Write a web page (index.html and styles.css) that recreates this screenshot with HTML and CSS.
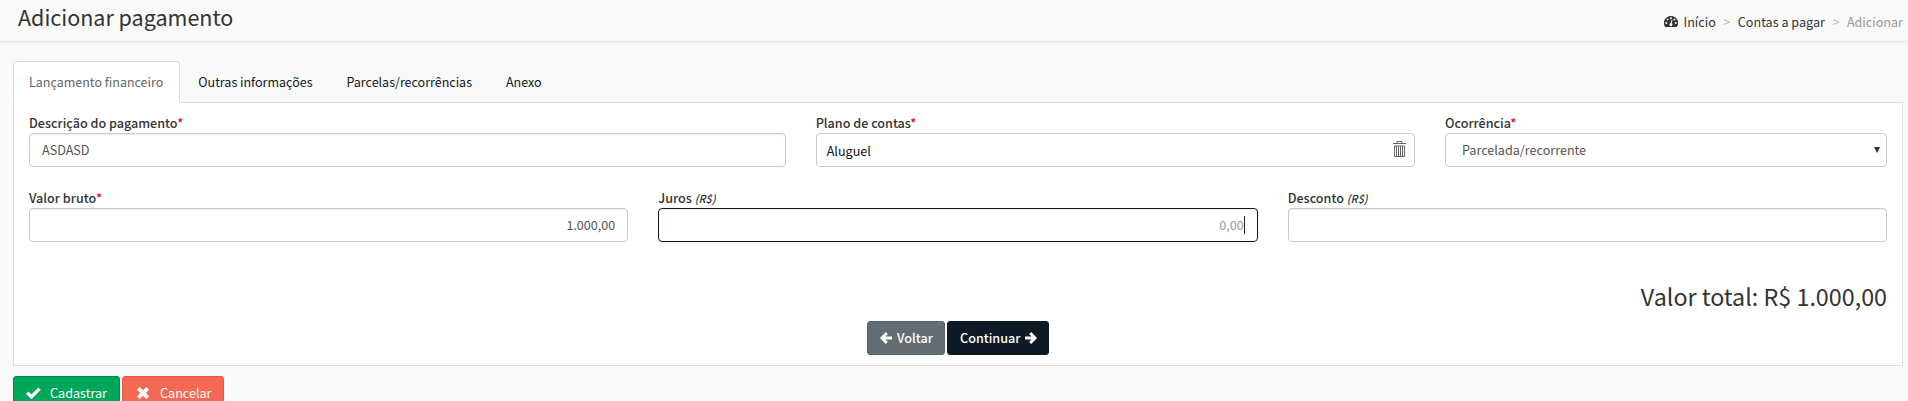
FILE: index.html
```html
<!DOCTYPE html>
<html lang="pt-BR">
<head>
<meta charset="utf-8">
<title>Adicionar pagamento</title>
<link rel="stylesheet" href="styles.css">
</head>
<body>
<header class="header">
  <h1 class="title">Adicionar pagamento</h1>
  <nav class="crumbs">
    <svg class="gauge" viewBox="0 0 14 12" width="14" height="12"><path fill="#333" d="M7 0a7 7 0 0 0-6 10.700q.2.300.6.300h10.800q.4 0 .6-.3A7 7 0 0 0 7 0z"/><g fill="#fafafa"><circle cx="2.200" cy="7" r="1"/><circle cx="3.600" cy="3.600" r="1"/><circle cx="7" cy="2.200" r="1"/><circle cx="10.400" cy="3.600" r="1"/><circle cx="11.800" cy="7" r="1"/><path d="M7.500 3.900l1 .3-.8 3.100a1.500 1.500 0 1 1-1-.2z"/></g></svg>
    <a class="crumb home">Início</a><span class="sep">&gt;</span><a class="crumb">Contas a pagar</a><span class="sep">&gt;</span><span class="crumb current">Adicionar</span>
  </nav>
</header>
<main class="content">
  <ul class="tabs">
    <li class="tab active">Lançamento financeiro</li>
    <li class="tab">Outras informações</li>
    <li class="tab">Parcelas/recorrências</li>
    <li class="tab">Anexo</li>
  </ul>
  <section class="panel">
    <div class="row">
      <div class="field col5">
        <label class="label">Descrição do pagamento<span class="req">*</span></label>
        <div class="input">ASDASD</div>
      </div>
      <div class="field col4">
        <label class="label">Plano de contas<span class="req">*</span></label>
        <div class="input picker"><span>Aluguel</span>
          <svg class="trash" viewBox="0 0 13 16" width="13" height="16" fill="none" stroke="#666"><path d="M0 2.500h13M4 2V.5h5V2M1.500 5v10.500h10V5zM3.500 5v10M5.500 5v10M7.500 5v10M9.500 5v10"/></svg>
        </div>
      </div>
      <div class="field col3">
        <label class="label">Ocorrência<span class="req">*</span></label>
        <div class="input select"><span>Parcelada/recorrente</span>
          <svg class="caret" viewBox="0 0 6 6" width="6" height="6"><path fill="#333" d="M0 0h6L3 6z"/></svg>
        </div>
      </div>
    </div>
    <div class="row second">
      <div class="field col4">
        <label class="label">Valor bruto<span class="req">*</span></label>
        <div class="input money">1.000,00</div>
      </div>
      <div class="field col4">
        <label class="label">Juros <em class="unit">(R$)</em></label>
        <div class="input money focused"><span class="placeholder">0,00</span></div>
      </div>
      <div class="field col4">
        <label class="label">Desconto <em class="unit">(R$)</em></label>
        <div class="input money"></div>
      </div>
    </div>
    <div class="total">Valor total: R$ 1.000,00</div>
    <div class="steps">
      <button class="btn back"><svg viewBox="0 0 12 12" width="12" height="12" fill="none" stroke="#fff" stroke-width="2.900"><path d="M6.800 1L2 6l4.800 5M2 6h10"/></svg><span>Voltar</span></button>
      <button class="btn next"><span>Continuar</span><svg viewBox="0 0 12 12" width="12" height="12" fill="none" stroke="#fff" stroke-width="2.900"><path d="M5.200 1L10 6l-4.800 5M10 6H0"/></svg></button>
    </div>
  </section>
  <div class="actions">
    <button class="btn save"><svg viewBox="0 0 15 12" width="15" height="12" fill="none" stroke="#fff" stroke-width="3.400"><path d="M1.200 5.800l4.300 4L13.600 1.600"/></svg><span>Cadastrar</span></button>
    <button class="btn cancel"><svg viewBox="0 0 12 12" width="12" height="12" fill="none" stroke="#fff" stroke-width="3.800"><path d="M1.300 1.300l9.400 9.400M10.700 1.300l-9.400 9.400"/></svg><span>Cancelar</span></button>
  </div>
</main>
</body>
</html>
```
FILE: styles.css
```css
* { box-sizing: border-box; }
body {
  margin: 0;
  height: 401px;
  overflow: hidden;
  background: #f9f9f9;
  color: #333;
  font: 12.6px/20px "Noto Sans CJK SC", "Open Sans", sans-serif;
}
svg { display: block; flex: none; }
.header {
  height: 42px;
  display: flex;
  justify-content: space-between;
  padding: 0 5px 0 18px;
  background: #fafafa;
  border-bottom: 1px solid #e4e4e4;
  box-shadow: 0 1px 2px rgba(0, 0, 0, .05);
}
.title { margin: 3px 0 0; font-size: 21.5px; line-height: 28px; font-weight: 400; }
.crumbs { display: flex; align-items: center; height: 20px; margin-top: 12px; }
.gauge { margin-right: 5px; }
.sep { width: 22px; text-align: center; color: #bbb; }
.current { color: #999; }
.content { padding: 19px 5px 0 13px; }
.tabs { display: flex; list-style: none; margin: 0 0 -1px; padding: 0; gap: 2px; font-size: 12.5px; }
.tab { height: 42px; padding: 10px 15px 0; border: 1px solid transparent; color: #0d1a26; }
.active {
  padding-right: 16px;
  background: #fff;
  color: #666;
  border-color: #ddd #ddd #fff;
  border-radius: 4px 4px 0 0;
  position: relative;
}
.panel { height: 264px; border: 1px solid #ddd; background: #fff; padding: 10px 15px 0; }
.row { display: flex; gap: 30px; height: 75px; }
.field { min-width: 0; }
.col5 { flex: 0 0 756.67px; }
.col4 { flex: 0 0 599.33px; }
.col3 { flex: 0 0 442px; }
.label { display: block; height: 20px; font-weight: 500; white-space: nowrap; }
.req { color: #f00010; }
.unit { font-size: 10.8px; }
.input {
  height: 34px;
  padding: 6px 12px;
  display: flex;
  align-items: center;
  border: 1px solid #ccc;
  border-radius: 4px;
  background: #fff;
  color: #555;
  box-shadow: inset 0 1px 1px rgba(0, 0, 0, .075);
}
.picker { padding: 8px 8px 6px 10px; color: #111; justify-content: space-between; box-shadow: none; }
.trash { margin-bottom: 4px; }
.select { padding: 6px 6px 6px 16px; justify-content: space-between; box-shadow: none; }
.money { justify-content: flex-end; }
.focused { border-color: #0d1a26; }
.placeholder { color: #999; box-shadow: 1px 0 0 #222; line-height: 18px; margin-right: 1px; }
.total { margin-top: 15px; height: 36px; text-align: right; font-size: 23.3px; line-height: 36px; }
.steps { display: flex; justify-content: center; gap: 2px; margin-top: 7px; }
.btn {
  height: 34px;
  padding: 0 12px;
  display: flex;
  align-items: center;
  gap: 5px;
  border: 1px solid;
  border-radius: 3px;
  color: #fff;
  font: 500 12.6px/20px "Noto Sans CJK SC", "Open Sans", sans-serif;
}
.back { width: 78px; background: #636c72; border-color: #5b646a; }
.next { width: 102px; background: #0d1a26; border-color: #0d1a26; }
.actions { display: flex; gap: 2px; margin-top: 10px; }
.actions .btn { gap: 9px; font-weight: 400; }
.save { width: 107px; background: #00a65a; border-color: #008d4c; }
.actions .cancel { width: 102px; background: #f56954; border-color: #f4543c; padding-left: 14px; gap: 11px; }
```
